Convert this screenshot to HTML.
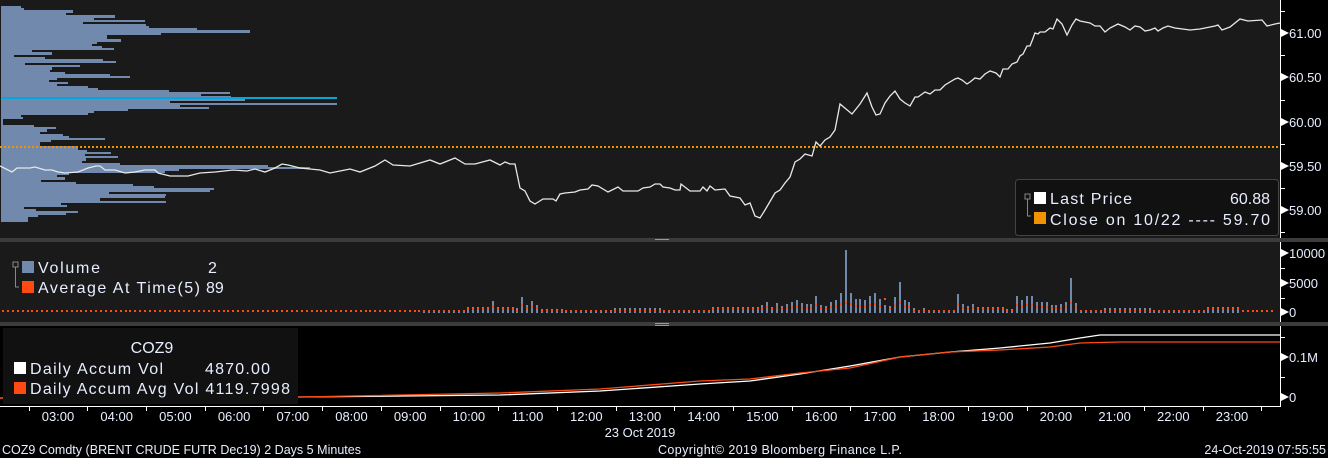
<!DOCTYPE html>
<html><head><meta charset="utf-8"><style>
html,body{margin:0;padding:0;background:#000;width:1328px;height:458px;overflow:hidden}
svg{display:block}
text{font-family:"Liberation Sans","DejaVu Sans",sans-serif}
</style></head><body>
<svg id="s" width="1328" height="458" xmlns="http://www.w3.org/2000/svg">
<rect width="1328" height="458" fill="#000"/>
<rect x="0" y="0" width="1280" height="238" fill="#1a1a1a"/>
<rect x="0" y="238" width="1328" height="4" fill="#3c3c3c"/>
<rect x="0" y="242" width="1280" height="80" fill="#1a1a1a"/>
<rect x="0" y="322" width="1328" height="4" fill="#3c3c3c"/>
<rect x="655" y="239" width="14" height="1" fill="#999"/>
<rect x="655" y="323" width="14" height="1" fill="#999"/>
<rect x="655" y="325" width="14" height="1" fill="#999"/>
<g id="hist" fill="#7189ad"></g>
<rect x="1" y="97" width="336" height="2" fill="#00a8e0"/>
<line x1="0" y1="147" x2="1280" y2="147" stroke="#f39200" stroke-width="2" stroke-dasharray="2,2"/>
<polyline id="price" fill="none" stroke="#e8e8e8" stroke-width="1.3"/>
<g id="vol"></g>
<polyline id="accw" fill="none" stroke="#fff" stroke-width="1.3"/>
<polyline id="accr" fill="none" stroke="#ff4a12" stroke-width="1.3"/>
<!-- price legend -->
<rect x="1015.5" y="179.5" width="263" height="56" rx="3" fill="#111" stroke="#444"/>
<rect x="1025" y="194" width="5" height="5" fill="none" stroke="#888"/>
<path d="M1027.5 199V216H1031" fill="none" stroke="#888"/>
<rect x="1034" y="192" width="12" height="12" fill="#fff"/>
<rect x="1034" y="212" width="12" height="12" fill="#f39200"/>
<text x="1050" y="204" fill="#e8eeff" font-size="16" textLength="82">Last Price</text>
<text x="1270" y="204" fill="#e8eeff" font-size="16" text-anchor="end">60.88</text>
<text x="1050" y="225" fill="#e8eeff" font-size="16" textLength="220">Close on 10/22 ---- 59.70</text>
<!-- vol legend -->
<rect x="13" y="262" width="5" height="5" fill="none" stroke="#888"/>
<path d="M15.5 267V287H19" fill="none" stroke="#888"/>
<rect x="22" y="261" width="12" height="12" fill="#7189ad"/>
<rect x="22" y="281" width="12" height="12" fill="#ff4a12"/>
<text x="38" y="273" fill="#e8eeff" font-size="16" textLength="62">Volume</text>
<text x="208" y="273" fill="#e8eeff" font-size="16">2</text>
<text x="38" y="293" fill="#e8eeff" font-size="16" textLength="162">Average At Time(5)</text>
<text x="206" y="293" fill="#e8eeff" font-size="16">89</text>
<!-- accum legend -->
<rect x="3" y="328" width="295" height="76" fill="#111"/>
<text x="152" y="353" fill="#e8eeff" font-size="16" text-anchor="middle">COZ9</text>
<rect x="14" y="362" width="12" height="12" fill="#fff"/>
<rect x="14" y="382" width="12" height="12" fill="#ff4a12"/>
<text x="30" y="374" fill="#e8eeff" font-size="16" textLength="133">Daily Accum Vol</text>
<text x="205" y="374" fill="#e8eeff" font-size="16" textLength="65">4870.00</text>
<text x="30" y="394" fill="#e8eeff" font-size="16" textLength="260">Daily Accum Avg Vol 4119.7998</text>
<!-- axes -->
<g id="ax" fill="#e8eeff" font-size="13"></g>
<line x1="1280.5" y1="0" x2="1280.5" y2="238" stroke="#fff"/>
<line x1="1280.5" y1="242" x2="1280.5" y2="322" stroke="#fff"/>
<line x1="1280.5" y1="326" x2="1280.5" y2="406" stroke="#fff"/>
<line x1="0" y1="406.5" x2="1281" y2="406.5" stroke="#fff"/>
<text x="640" y="437" fill="#e8eeff" font-size="13" text-anchor="middle">23 Oct 2019</text>
<text x="2" y="454" fill="#e8eeff" font-size="12.5" textLength="359">COZ9 Comdty (BRENT CRUDE FUTR  Dec19) 2 Days 5 Minutes</text>
<text x="658" y="454" fill="#e8eeff" font-size="12.5" textLength="244">Copyright© 2019 Bloomberg Finance L.P.</text>
<text x="1326" y="454" fill="#e8eeff" font-size="12.5" text-anchor="end">24-Oct-2019 07:55:55</text>
</svg>
<script>
var NS="http://www.w3.org/2000/svg";
function el(t,a,p){var e=document.createElementNS(NS,t);for(var k in a)e.setAttribute(k,a[k]);(p||document.getElementById('s')).appendChild(e);return e;}
var H=[[6,20],[8,23],[10,72],[13,65],[15,114],[18,93],[20,144],[22,82],[24,145],[26,148],[28,196],[30,249],[33,160],[35,106],[37,106],[39,120],[42,96],[44,91],[46,101],[48,113],[50,31],[52,51],[55,13],[57,44],[59,102],[61,115],[63,24],[65,79],[67,51],[70,49],[72,64],[74,109],[76,129],[78,56],[80,48],[82,67],[84,56],[86,87],[88,97],[90,168],[92,229],[94,200],[96,230],[99,244],[101,169],[103,336],[105,179],[107,208],[109,127],[111,93],[113,87],[115,20],[117,22],[119,2],[121,2],[123,2],[125,33],[127,55],[129,46],[132,39],[134,62],[136,68],[138,104],[140,50],[142,39],[144,39],[146,77],[148,77],[150,86],[152,110],[154,84],[156,117],[158,85],[161,81],[163,119],[165,267],[167,309],[169,178],[171,164],[173,68],[175,56],[177,64],[180,40],[182,75],[184,132],[186,153],[188,213],[190,209],[192,108],[194,165],[196,164],[198,99],[201,165],[203,60],[205,66],[207,23],[209,35],[211,77],[213,65],[215,37],[217,27],[219,27]];
var g=document.getElementById('hist');
for(var i=0;i<H.length;i++){var n=i<H.length-1?H[i+1][0]:222;el('rect',{x:1,y:H[i][0],width:H[i][1],height:n-H[i][0]},g);}
var P="0,166 12,172 17,168 30,168 35,167 45,170 52,170 58,172 65,173 78,172 88,168 96,166 100,166 105,170 115,170 125,173 135,172 145,170 155,170 158,173 170,176 188,176 200,173 215,172 233,170 247,171 255,169 265,172 275,168 282,164 288,165 300,168 320,170 330,173 340,171 350,169 360,172 375,166 385,160 393,165 410,166 420,163 430,160 440,164 455,158 465,164 475,164 490,160 500,165 505,162 510,164 515,164 520,188 525,191 530,201 535,204 543,199 553,199 556,201 560,194 565,193 575,192 580,190 588,189 592,185 598,186 608,192 618,187 623,191 638,191 643,188 650,187 655,184 660,184 663,187 670,188 675,190 680,190 681,184 690,191 700,191 703,187 707,191 710,186 715,190 725,189 730,196 740,198 745,205 750,203 755,216 760,218 765,210 775,193 780,190 785,183 790,177 795,162 800,159 805,154 812,156 816,142 820,146 825,140 830,137 835,130 840,104 852,114 860,104 867,93 872,107 876,115 880,114 885,103 890,96 895,91 900,99 905,103 910,106 915,97 918,97 925,92 930,94 935,90 940,90 945,85 955,79 958,78 962,80 967,84 970,82 975,78 980,79 985,74 990,71 996,73 1000,77 1003,69 1008,69 1012,64 1017,62 1020,56 1023,54 1027,46 1030,46 1032,41 1035,33 1038,34 1040,32 1045,32 1050,28 1053,29 1057,19 1062,24 1067,35 1072,25 1076,19 1080,21 1090,23 1095,26 1100,26 1105,32 1110,28 1118,24 1125,27 1130,30 1135,26 1140,27 1145,31 1150,30 1155,28 1158,31 1163,28 1168,26 1175,28 1190,30 1200,29 1215,26 1218,25 1222,30 1230,27 1240,19 1248,21 1262,20 1267,26 1275,24 1280,23";
document.getElementById('price').setAttribute('points',P);
var vg=document.getElementById('vol');
var over={490:20,493:12,497:6,502:6,509:6,518:5,521:16,526:8,533:12,538:8,
 760:8,765:11,770:6,775:10,781:7,786:9,790:11,795:13,800:10,805:9,810:9,817:17,822:8,827:7,832:11,837:13,842:20,847:63,852:20,857:14,862:13,867:17,872:14,876:20,881:14,886:8,891:7,896:16,900:31,905:13,910:11,915:5,921:5,
 958:19,963:9,968:7,973:9,1018:17,1023:13,1028:17,1033:17,1038:11,1043:11,1048:11,1053:8,1058:9,1063:11,1068:17,1072:35,1077:10};
var base=313;
for(var x=2;x<1272;x+=4.9){
 var xi=Math.round(x),h=1;
 for(var k in over){if(Math.abs(k-xi)<=2){h=over[k];}}
 if(h==1&&xi>420&&xi<1240)h=2+((xi*7)%5);
 if(h>1)el('rect',{x:xi,y:base-h,width:2,height:h,fill:'#7189ad'},vg);
 var a=2+(h>5?Math.min(h*0.35,8):0);
 if(xi>=900&&xi<=903)a=41; if(xi>=880&&xi<=884)a=14;
 el('rect',{x:xi,y:base-a-1,width:2,height:2,fill:'#ff4a12'},vg);
}
document.getElementById('accw').setAttribute('points',"0,398 300,397 500,395 600,391 700,384 750,381 800,374 850,366 900,357 950,352 1000,348 1050,343 1080,338 1100,335 1280,335");
document.getElementById('accr').setAttribute('points',"0,398 300,397 500,393 600,389 700,381 750,379 800,373 850,368 900,357 950,352 1000,350 1050,347 1080,343 1120,342 1280,342");
var ax=document.getElementById('ax');
function lab(y,t){el('path',{d:'M1281 '+(y-4)+'L1289 '+y+'L1281 '+(y+4)+'Z',fill:'#fff'},ax);var e=el('text',{x:1289,y:y+5},ax);e.textContent=t;}
function tk(y){el('line',{x1:1280,y1:y+0.5,x2:1285,y2:y+0.5,stroke:'#fff'},ax);}
[[33,'61.00'],[77,'60.50'],[122,'60.00'],[166,'59.50'],[210,'59.00']].forEach(function(a){lab(a[0],a[1]);});
[11,55,100,144,188,232].forEach(tk);
[[253,'10000'],[283,'5000'],[312,'0']].forEach(function(a){lab(a[0],a[1]);});
[268,298].forEach(tk);
[[357,'0.1M'],[397,'0']].forEach(function(a){lab(a[0],a[1]);});
[337,377].forEach(tk);
for(var h=3;h<=23;h++){var x=58+(h-3)*58.7;var e=el('text',{x:x,y:421,'text-anchor':'middle'},ax);e.textContent=(h<10?'0':'')+h+':00';
 el('line',{x1:Math.round(x-29.35)+0.5,y1:406,x2:Math.round(x-29.35)+0.5,y2:411,stroke:'#fff'},ax);}
el('line',{x1:1261.5,y1:406,x2:1261.5,y2:411,stroke:'#fff'},ax);
</script>
</body></html>
